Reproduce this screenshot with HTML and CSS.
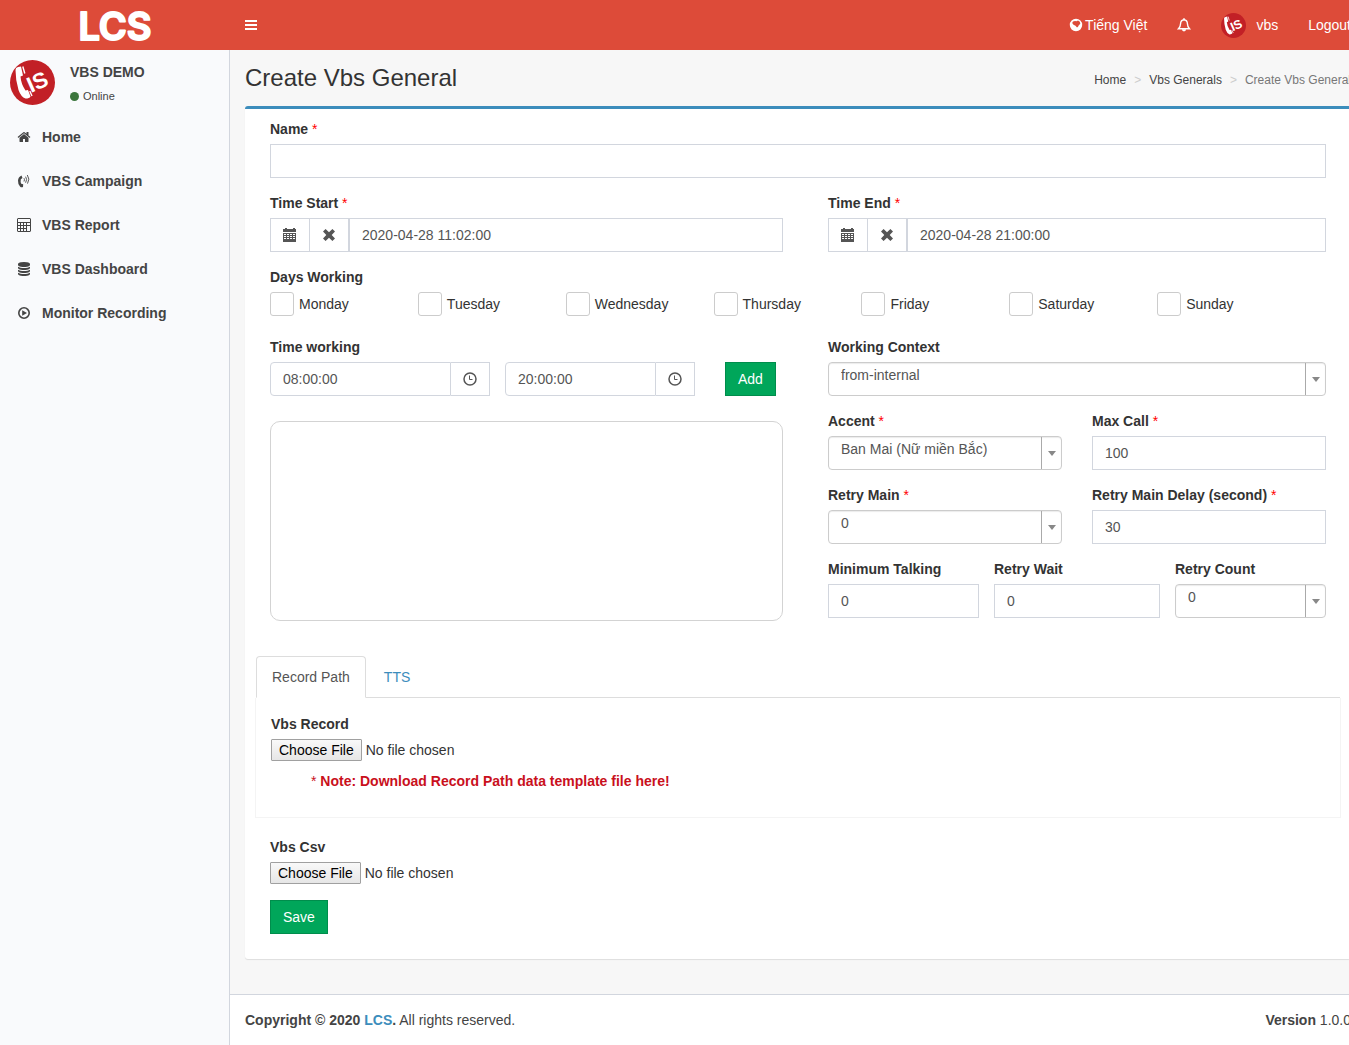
FILE: index.html
```html
<!DOCTYPE html>
<html lang="en">
<head>
<meta charset="utf-8">
<title>Create Vbs General</title>
<link rel="stylesheet" href="styles.css">
</head>
<body>
<svg class="sprite" aria-hidden="true">
  <symbol id="handset" viewBox="0 0 45 45">
    <circle cx="22.500" cy="22.500" r="22.500" fill="#c22026"/>
    <path d="M5.500 10 Q5.500 7.500 8 7 L11 6.500 L13 15.500 L10.500 16.500 Q11 24 15.500 30.500 L18 30 L20.500 36.500 Q19.500 38.500 15.500 38.500 Q11 37 8.500 30 Q5.500 20 5.500 10Z" fill="#fff"/>
    <path d="M12.800 6.500 L14.800 13.500 M19.800 31 L22 36" stroke="#fff" stroke-width="1.400" fill="none"/>
  </symbol>
  <symbol id="home" viewBox="0 0 1792 1792"><path d="M1472 992v480q0 26-19 45t-45 19h-384v-384h-256v384h-384q-26 0-45-19t-19-45v-480q0-1 .5-3t.5-3l575-474 575 474q1 2 1 6zm223-69l-62 74q-8 9-21 11h-3q-13 0-21-7l-692-577-692 577q-12 8-24 7-13-2-21-11l-62-74q-8-10-7-23.500t11-21.500l719-599q32-26 76-26t76 26l244 204v-195q0-14 9-23t23-9h192q14 0 23 9t9 23v408l219 182q10 8 11 21.500t-7 23.500z"/></symbol>
  <symbol id="clock" viewBox="0 0 14 14"><circle cx="7" cy="7" r="6" fill="none" stroke="currentColor" stroke-width="1.500"/><path d="M6.500 3.500V7.500H9.500" fill="none" stroke="currentColor" stroke-width="1"/></symbol>
  <symbol id="database" viewBox="0 0 1792 1792"><path d="M896 768q237 0 443-43t325-127v170q0 69-103 128t-280 93.500-385 34.500-385-34.500-280-93.500-103-128v-170q119 84 325 127t443 43zm0 768q237 0 443-43t325-127v170q0 69-103 128t-280 93.500-385 34.500-385-34.500-280-93.500-103-128v-170q119 84 325 127t443 43zm0-384q237 0 443-43t325-127v170q0 69-103 128t-280 93.500-385 34.500-385-34.500-280-93.500-103-128v-170q119 84 325 127t443 43zm0-1152q208 0 385 34.500t280 93.500 103 128v128q0 69-103 128t-280 93.500-385 34.500-385-34.500-280-93.500-103-128v-128q0-69 103-128t280-93.500 385-34.500z"/></symbol>
  <symbol id="phone" viewBox="0 0 14 14">
    <path d="M4.500 1.500 L5.500 4 L3.800 5.200 Q3.300 7.500 4.200 9.700 L6.200 10.200 L6 13 Q4.500 13.800 3.200 12.800 Q.8 10.500 1 6.500 Q1.200 3 4.500 1.500Z"/>
    <path d="M7 4.200q.9 1.300 0 3.300M8.600 2.700q2 2.500 0 6M10.300 1q3 4 .2 8.600" fill="none" stroke="currentColor" stroke-width=".9"/>
  </symbol>
  <symbol id="calc" viewBox="0 0 14 14"><path fill-rule="evenodd" d="M1 0h12l1 1v12l-1 1H1l-1-1V1zM1 1v3h12V1zM1 5v2h2V5zM4 5v2h2V5zM7 5v2h2V5zM10 5v2h3V5zM1 8v2h2V8zM4 8v2h2V8zM7 8v2h2V8zM10 8v5h3V8zM1 11v2h2v-2zM4 11v2h2v-2zM7 11v2h2v-2z"/></symbol>
  <symbol id="play" viewBox="0 0 14 14"><circle cx="7" cy="7" r="5.200" fill="none" stroke="currentColor" stroke-width="1.600"/><path d="M5.200 4.200 10 7 5.200 9.800z"/></symbol>
  <symbol id="bars" viewBox="0 0 12 14"><path d="M0 2h12v2H0zM0 6h12v2H0zM0 10h12v2H0z"/></symbol>
  <symbol id="globe" viewBox="0 0 14 14"><path fill-rule="evenodd" d="M7 .8a6.200 6.200 0 1 1 0 12.400A6.200 6.200 0 0 1 7 .8zM4 3.500 3.200 5 4.500 6.800l2 1 1.500 1.700 1-.8.800-1.500 1.500-1.500-.5-2-1.800-1.200-1.500.8L6 3z"/></symbol>
  <symbol id="bell" viewBox="0 0 14 14"><path d="M7 1.700C4.600 1.900 3.700 3.400 3.600 5.500 3.500 8 2.900 9.500 1.500 10.800h11C11.100 9.500 10.500 8 10.400 5.500 10.300 3.400 9.400 1.900 7 1.700z" fill="none" stroke="currentColor" stroke-width="1.400"/><path d="M6.200.2h1.600v1.600H6.200zM4.900 11.300h4.200a2.100 2.100 0 0 1-4.200 0z"/></symbol>
  <symbol id="calendar" viewBox="0 0 14 14"><path fill-rule="evenodd" d="M0 1h2V0h2v1h6V0h2v1h1v3H0zM0 5h13v9H0zM1 6v1h2V6zM4 6v1h2V6zM7 6v1h2V6zM10 6v1h2V6zM1 8v1h2V8zM4 8v1h2V8zM7 8v1h2V8zM10 8v1h2V8zM1 10v1h2v-1zM4 10v1h2v-1zM7 10v1h2v-1zM10 10v1h2v-1z"/></symbol>
  <symbol id="remove" viewBox="0 0 14 14"><path d="M1 3.600 3.600 1 7 4.300 10.400 1 13 3.600 9.700 7 13 10.400 10.400 13 7 9.700 3.600 13 1 10.400 4.300 7z"/></symbol>
</svg>

<div class="page">
  <header class="topbar">
    <a class="logo" href="#"><svg class="logo-mark" viewBox="0 0 90 50"><text x="45" y="40">LCS</text></svg></a>
    <button class="toggle" type="button" aria-label="Toggle navigation"><svg class="icon-bars"><use href="#bars"/></svg></button>
    <nav class="topnav">
      <a href="#"><svg class="icon"><use href="#globe"/></svg><span class="lang">Tiếng Việt</span></a>
      <a href="#" aria-label="Notifications"><svg class="icon"><use href="#bell"/></svg></a>
      <a href="#"><svg class="avatar-small" viewBox="0 0 45 45"><use href="#handset"/><text x="21" y="33" transform="rotate(-24 21 33)">IS</text></svg>vbs</a>
      <a href="#">Logout</a>
    </nav>
  </header>

  <div class="main">
    <aside class="sidebar">
      <div class="user">
        <svg class="avatar" viewBox="0 0 45 45"><use href="#handset"/><text x="21" y="33" transform="rotate(-24 21 33)">IS</text></svg>
        <div>
          <p class="user-name">VBS DEMO</p>
          <a class="status" href="#"><span class="dot"></span>Online</a>
        </div>
      </div>
      <nav class="menu">
        <a href="#"><svg class="icon"><use href="#home"/></svg>Home</a>
        <a href="#"><svg class="icon"><use href="#phone"/></svg>VBS Campaign</a>
        <a href="#"><svg class="icon"><use href="#calc"/></svg>VBS Report</a>
        <a href="#"><svg class="icon"><use href="#database"/></svg>VBS Dashboard</a>
        <a href="#"><svg class="icon"><use href="#play"/></svg>Monitor Recording</a>
      </nav>
    </aside>

    <div class="content">
      <div class="content-header">
        <h1>Create Vbs General</h1>
        <ol class="breadcrumb">
          <li><a href="#">Home</a></li>
          <li><a href="#">Vbs Generals</a></li>
          <li class="current">Create Vbs General</li>
        </ol>
      </div>

      <form class="card">
        <div class="fields">
          <div class="field">
            <label for="name">Name <span class="req">*</span></label>
            <input class="control" id="name" type="text">
          </div>

          <div class="halves">
            <div class="field">
              <label for="start">Time Start <span class="req">*</span></label>
              <div class="group">
                <button class="addon first" type="button" aria-label="Pick start time"><svg class="icon"><use href="#calendar"/></svg></button>
                <button class="addon" type="button" aria-label="Clear start time"><svg class="icon"><use href="#remove"/></svg></button>
                <input class="control" id="start" type="text" value="2020-04-28 11:02:00">
              </div>
            </div>
            <div class="field">
              <label for="end">Time End <span class="req">*</span></label>
              <div class="group">
                <button class="addon first" type="button" aria-label="Pick end time"><svg class="icon"><use href="#calendar"/></svg></button>
                <button class="addon" type="button" aria-label="Clear end time"><svg class="icon"><use href="#remove"/></svg></button>
                <input class="control" id="end" type="text" value="2020-04-28 21:00:00">
              </div>
            </div>
          </div>

          <fieldset class="days">
            <legend>Days Working</legend>
            <div class="day-list">
              <label><input type="checkbox">Monday</label>
              <label><input type="checkbox">Tuesday</label>
              <label><input type="checkbox">Wednesday</label>
              <label><input type="checkbox">Thursday</label>
              <label><input type="checkbox">Friday</label>
              <label><input type="checkbox">Saturday</label>
              <label><input type="checkbox">Sunday</label>
            </div>
          </fieldset>

          <div class="halves">
            <div>
              <label for="from">Time working</label>
              <div class="times">
                <div class="group time-from">
                  <input class="control rounded" id="from" type="text" value="08:00:00">
                  <button class="addon last" type="button" aria-label="Pick from time"><svg class="icon"><use href="#clock"/></svg></button>
                </div>
                <div class="group time-to">
                  <input class="control rounded" type="text" value="20:00:00" aria-label="Time working until">
                  <button class="addon last" type="button" aria-label="Pick until time"><svg class="icon"><use href="#clock"/></svg></button>
                </div>
                <button class="btn add" type="button">Add</button>
              </div>
              <div class="time-list"></div>
            </div>

            <div>
              <div class="field">
                <label for="context">Working Context</label>
                <div class="select"><select id="context"><option>from-internal</option></select></div>
              </div>
              <div class="pair">
                <div class="field">
                  <label for="accent">Accent <span class="req">*</span></label>
                  <div class="select"><select id="accent"><option>Ban Mai (Nữ miền Bắc)</option></select></div>
                </div>
                <div class="field">
                  <label for="max">Max Call <span class="req">*</span></label>
                  <input class="control" id="max" type="text" value="100">
                </div>
                <div class="field">
                  <label for="retry">Retry Main <span class="req">*</span></label>
                  <div class="select"><select id="retry"><option>0</option></select></div>
                </div>
                <div class="field">
                  <label for="delay">Retry Main Delay (second) <span class="req">*</span></label>
                  <input class="control" id="delay" type="text" value="30">
                </div>
              </div>
              <div class="triple">
                <div class="field">
                  <label for="talk">Minimum Talking</label>
                  <input class="control" id="talk" type="text" value="0">
                </div>
                <div class="field">
                  <label for="wait">Retry Wait</label>
                  <input class="control" id="wait" type="text" value="0">
                </div>
                <div class="field">
                  <label for="count">Retry Count</label>
                  <div class="select"><select id="count"><option>0</option></select></div>
                </div>
              </div>
            </div>
          </div>
        </div>

        <nav class="tabs">
          <a class="active" href="#record">Record Path</a>
          <a href="#tts">TTS</a>
        </nav>
        <div class="tab-pane" id="record">
          <label for="rec">Vbs Record</label>
          <input class="file" id="rec" type="file">
          <p class="note">* <a href="#">Note: Download Record Path data template file here!</a></p>
        </div>

        <div class="submit">
          <label for="csv">Vbs Csv</label>
          <input class="file" id="csv" type="file">
          <button class="btn save" type="button">Save</button>
        </div>
      </form>

      <footer class="footer">
        <div><strong>Copyright © 2020 <a href="#">LCS</a>.</strong> All rights reserved.</div>
        <div><b>Version</b> 1.0.0</div>
      </footer>
    </div>
  </div>
</div>
</body>
</html>
```
FILE: styles.css
```css
* { box-sizing: border-box; }

html { overflow: hidden; }

body {
  margin: 0;
  font-family: "Liberation Sans", Arial, sans-serif;
  font-size: 14px;
  line-height: 20px;
  color: #333;
  background: #f9fafc;
}

a { color: inherit; text-decoration: none; }
p, h1 { margin: 0; }
input, select, button { font: inherit; }
svg { fill: currentColor; flex: none; }

.sprite { display: block; width: 0; height: 0; }
.icon { display: block; width: 14px; height: 14px; }

.page {
  display: flex;
  flex-direction: column;
  min-height: 100vh;
  margin-right: -17px;
}

/* Top bar */
.topbar {
  display: flex;
  align-items: center;
  height: 50px;
  background: #dd4b39;
  color: #fff;
}
.logo { width: 230px; }
.logo-mark { display: block; width: 90px; height: 50px; margin: 0 auto; }
.logo-mark text {
  font: 600 38px Inter, sans-serif;
  text-anchor: middle;
  stroke: #fff;
  stroke-width: 2px;
  stroke-linejoin: round;
}
.toggle {
  padding: 15px;
  border: 0;
  background: none;
  color: inherit;
}
.icon-bars { display: block; width: 12px; height: 14px; }
.topnav { display: flex; margin-left: auto; }
.topnav a {
  display: flex;
  align-items: center;
  height: 50px;
  padding: 0 15px;
}
.lang { margin-left: 2px; }
.avatar-small { width: 25px; height: 25px; margin-right: 10px; }
.avatar text, .avatar-small text { font: bold 22px "Liberation Sans", Arial, sans-serif; fill: #fff; }

.main { display: flex; flex: 1; }

/* Sidebar */
.sidebar {
  flex: none;
  width: 230px;
  border-right: 1px solid #d2d6de;
  color: #444;
}
.user { display: flex; gap: 15px; height: 65px; padding: 10px; }
.avatar { width: 45px; height: 45px; }
.user-name { padding: 2px 0; font-weight: bold; }
.status {
  display: flex;
  align-items: center;
  gap: 4px;
  padding-top: 2px;
  font-size: 11px;
}
.dot { width: 9px; height: 9px; border-radius: 50%; background: #3c763d; }
.menu a {
  display: flex;
  align-items: center;
  gap: 11px;
  padding: 12px 17px;
  font-weight: bold;
}

/* Content */
.content {
  display: flex;
  flex: 1;
  flex-direction: column;
  min-width: 0;
  background: #f7f7f7;
}
.content-header {
  display: flex;
  justify-content: space-between;
  align-items: center;
  padding: 15px;
}
h1 { font-size: 24px; font-weight: normal; line-height: 26px; }
.breadcrumb {
  display: flex;
  margin: 0;
  padding: 4px 0 0;
  list-style: none;
  font-size: 12px;
  color: #444;
}
.breadcrumb li + li::before { content: ">"; padding: 0 8px; color: #ccc; }
.breadcrumb .current { color: #777; }

.card {
  margin: 0 15px 35px;
  padding: 10px 10px 25px;
  border-top: 3px solid #3c8dbc;
  border-radius: 3px;
  background: #fff;
  box-shadow: 0 1px 1px rgba(0, 0, 0, .1);
}
.fields { padding: 0 15px; }
.field { margin-bottom: 15px; }
label, legend { display: block; font-weight: bold; margin-bottom: 5px; padding: 0; }
.req { color: #f00; font-weight: normal; }

.halves { display: grid; grid-template-columns: 513fr 498fr; column-gap: 45px; }
.pair { display: grid; grid-template-columns: 1fr 1fr; column-gap: 30px; }
.triple { display: grid; grid-template-columns: 151fr 166fr 151fr; column-gap: 15px; }

.control {
  display: block;
  width: 100%;
  min-width: 0;
  height: 34px;
  padding: 6px 12px;
  border: 1px solid #d2d6de;
  border-radius: 0;
  background: #fff;
  color: #555;
}
.rounded { border-radius: 4px 0 0 4px; }

.group { display: flex; }
.addon {
  display: flex;
  flex: none;
  align-items: center;
  justify-content: center;
  width: 40px;
  height: 34px;
  padding: 0;
  border: 1px solid #d2d6de;
  background: #fff;
  color: #555;
}
.addon.first { width: 39px; border-right: 0; }
.addon.last { width: 39px; border-left: 0; }

.select { position: relative; }
.select select {
  display: block;
  width: 100%;
  height: 34px;
  padding: 0 32px 8px 12px;
  border: 1px solid #ccc;
  border-radius: 4px;
  appearance: none;
  background: #fff;
  color: #555;
  box-shadow: inset 0 1px 1px rgba(0, 0, 0, .08);
}
.select::before {
  content: "";
  position: absolute;
  top: 1px;
  right: 20px;
  bottom: 1px;
  border-left: 1px solid #aaa;
}
.select::after {
  content: "";
  position: absolute;
  top: 15px;
  right: 6px;
  border: 4px solid transparent;
  border-top: 5px solid #888;
  border-bottom: 0;
}

.days { margin: 0 0 21px; padding: 0; border: 0; min-width: 0; }
.day-list { display: grid; grid-template-columns: repeat(7, 1fr); padding-right: 21px; }
.day-list label {
  display: flex;
  align-items: center;
  gap: 5px;
  margin: 0;
  font-weight: normal;
}
.day-list input {
  width: 24px;
  height: 24px;
  margin: 0;
  border: 1px solid #ccc;
  border-radius: 3px;
  appearance: none;
  background: #fff;
}

.times { display: flex; }
.time-from { flex: 0 1 220px; margin-right: 15px; }
.time-to { flex: 0 1 190px; margin-right: 30px; }
.time-list {
  height: 200px;
  margin-top: 25px;
  border: 1px solid #d3d3d3;
  border-radius: 10px;
}

.btn {
  height: 34px;
  padding: 6px 12px;
  border: 1px solid #008d4c;
  background: #00a65a;
  color: #fff;
}

/* Tabs */
.tabs {
  display: flex;
  gap: 2px;
  margin: 23px 1px 0;
  border-bottom: 1px solid #ddd;
}
.tabs a {
  margin-bottom: -1px;
  padding: 10px 15px;
  border: 1px solid transparent;
  border-radius: 4px 4px 0 0;
  color: #3c8dbc;
}
.tabs .active {
  border-color: #ddd;
  border-bottom-color: #fff;
  background: #fff;
  color: #555;
}
.tab-pane {
  padding: 16px 15px 26px;
  border: 1px solid #f4f4f4;
  border-top: 0;
}
.file { display: block; height: 22px; color: #333; }
.file::file-selector-button {
  height: 22px;
  margin: 0 4px 0 0;
  padding: 0 7px;
  border: 1px solid #a0a0a0;
  border-radius: 1px;
  background: linear-gradient(#f9f9f9, #e6e6e6);
  color: #000;
  font: inherit;
}
.note { padding: 10px 0 0 40px; color: #c9101c; }
.note a { font-weight: bold; }

.submit { padding: 19px 15px 0; }
.save { margin-top: 16px; }

.footer {
  display: flex;
  flex: 1;
  justify-content: space-between;
  padding: 15px;
  border-top: 1px solid #d2d6de;
  background: #fff;
  color: #444;
}
.footer a { color: #3c8dbc; }
```
